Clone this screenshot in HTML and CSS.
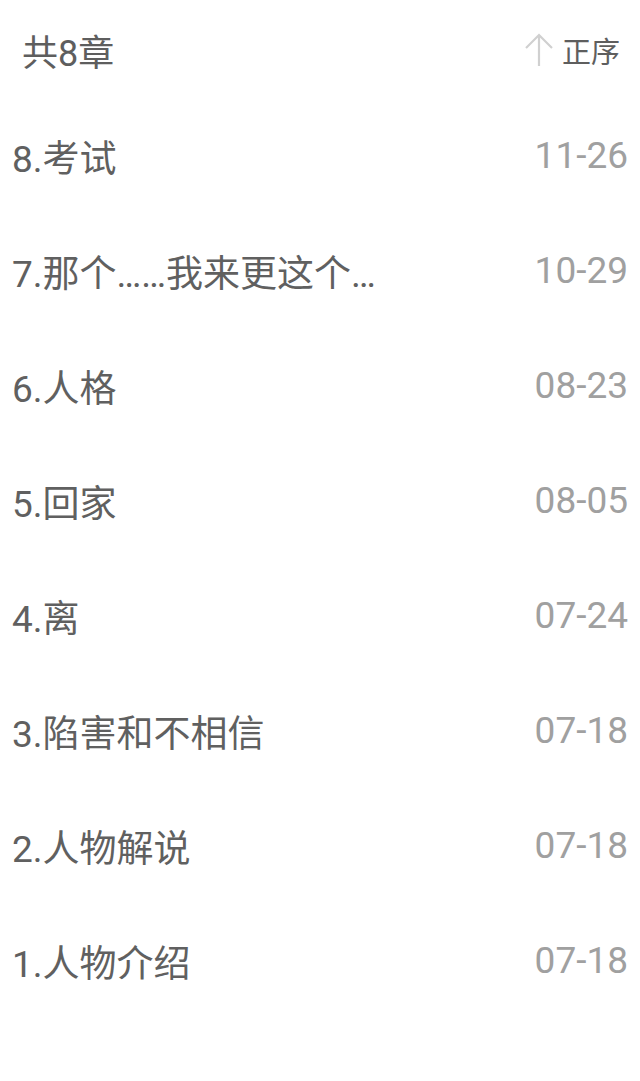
FILE: index.html
```html
<!DOCTYPE html>
<html lang="zh-CN">
<head>
<meta charset="utf-8">
<link rel="stylesheet" href="styles.css">
</head>
<body>
<div class="page">
  <div class="header">
    <div class="count">共8章</div>
    <div class="sort">
      <svg class="arrow" width="30" height="34" viewBox="0 0 30 34"><path d="M15 2 V33 M2 15 L15 2 L28 15" fill="none" stroke="#d0d0d0" stroke-width="2.2"/></svg>
      <span>正序</span>
    </div>
  </div>
  <ul class="list">
    <li class="row"><span class="title">8.考试</span><span class="date">11-26</span></li>
    <li class="row"><span class="title">7.那个……我来更这个…</span><span class="date">10-29</span></li>
    <li class="row"><span class="title">6.人格</span><span class="date">08-23</span></li>
    <li class="row"><span class="title">5.回家</span><span class="date">08-05</span></li>
    <li class="row"><span class="title">4.离</span><span class="date">07-24</span></li>
    <li class="row"><span class="title">3.陷害和不相信</span><span class="date">07-18</span></li>
    <li class="row"><span class="title">2.人物解说</span><span class="date">07-18</span></li>
    <li class="row"><span class="title">1.人物介绍</span><span class="date">07-18</span></li>
  </ul>
</div>
</body>
</html>
```

FILE: styles.css
```css
html, body {
  margin: 0;
  padding: 0;
  background: #ffffff;
}
body {
  font-family: Roboto, "Noto Sans CJK SC", sans-serif;
  font-weight: 400;
  color: #555555;
}
.page {
  width: 640px;
}
.header {
  height: 100px;
  display: flex;
  align-items: center;
  justify-content: space-between;
  padding: 0 20px 0 22px;
  box-sizing: border-box;
}
.count {
  font-size: 36px;
  color: #5e5e5e;
}
.sort {
  display: flex;
  align-items: center;
  gap: 8px;
  font-size: 29px;
  color: #5e5e5e;
}
.arrow {
  display: block;
}
.list {
  list-style: none;
  margin: 0;
  padding: 0;
}
.row {
  height: 115px;
  display: flex;
  align-items: center;
  justify-content: space-between;
  padding: 0 12px 4px 12px;
  box-sizing: border-box;
}
.title {
  font-size: 37px;
  color: #606060;
  white-space: nowrap;
}
.date {
  font-size: 37px;
  color: #a0a0a0;
}
```
